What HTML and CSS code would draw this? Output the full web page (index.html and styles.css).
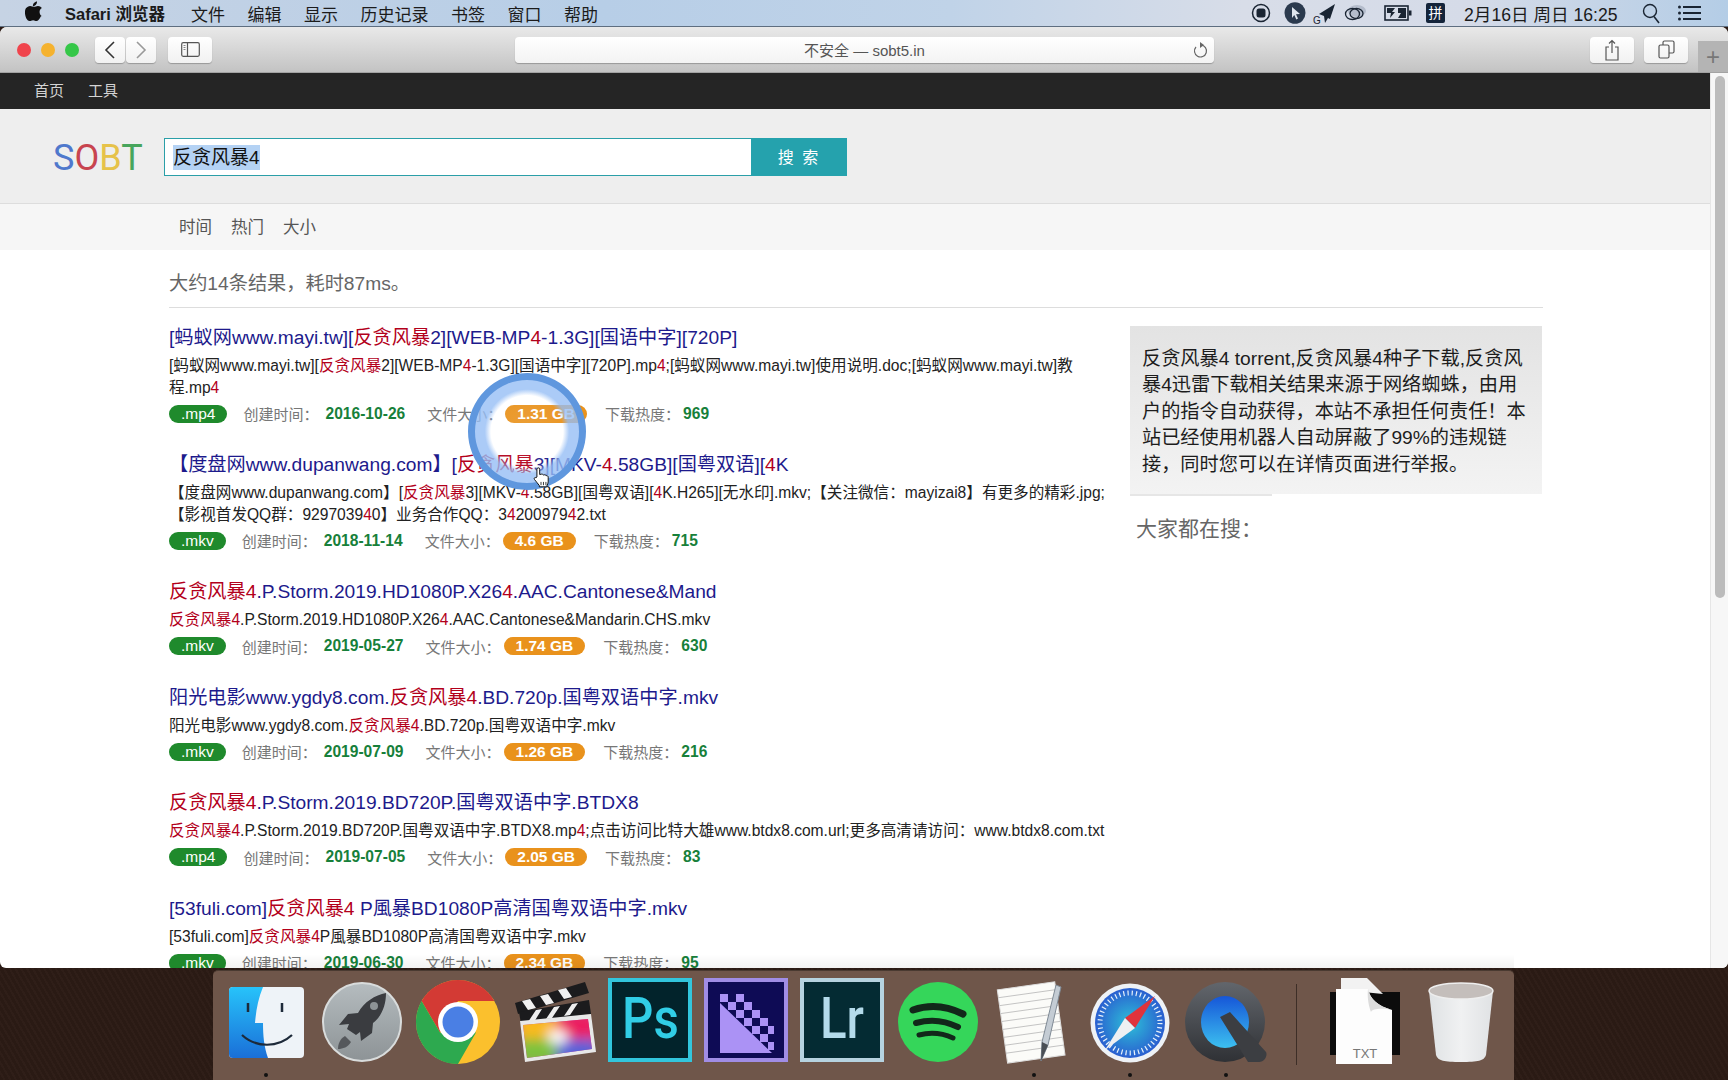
FILE: index.html
```html
<!DOCTYPE html>
<html lang="zh-CN">
<head>
    <meta charset="UTF-8">
    <title>反贪风暴4 - SOBT</title>
    <link rel="stylesheet" href="styles.css">
</head>
<body>

<!-- 系统菜单栏 -->
<div class="menubar">
    <svg class="apple" viewBox="0 0 17 20" width="17" height="20"><path fill="#111" d="M12 .5c.1 1.300-.4 2.500-1.100 3.300-.8.900-1.900 1.500-3 1.400-.1-1.200.4-2.400 1.100-3.200C9.800 1.100 11 .5 12 .5zM16.300 14.600c-.5 1.100-.7 1.500-1.300 2.500-.9 1.300-2 2.900-3.500 2.900-1.300 0-1.600-.8-3.400-.8s-2.200.8-3.500.8c-1.500 0-2.500-1.500-3.400-2.800C-.3 13.700-.6 9.500.9 7.300c1.100-1.500 2.700-2.400 4.300-2.400s2.600.9 3.900.9c1.300 0 2-.9 3.900-.9 1.400 0 2.900.8 3.900 2.100-3.400 1.900-2.900 6.700.4 8.600z"/></svg>
    <span class="menu-app">Safari 浏览器</span>
    <span class="menu-item">文件</span>
    <span class="menu-item">编辑</span>
    <span class="menu-item">显示</span>
    <span class="menu-item">历史记录</span>
    <span class="menu-item">书签</span>
    <span class="menu-item">窗口</span>
    <span class="menu-item">帮助</span>
    <div class="status">
        <svg width="20" height="20" viewBox="0 0 20 20"><circle cx="10" cy="10" r="8.500" fill="none" stroke="#1a2533" stroke-width="1.500"/><rect x="5.500" y="5.500" width="9" height="9" rx="2.500" fill="#1a2533"/></svg>
        <svg width="22" height="22" viewBox="0 0 22 22"><ellipse cx="11" cy="11" rx="10.500" ry="10.800" fill="#2b3a4e"/><path d="M8 5l8 7-4 .3 2 4.300-1.700.8-2-4.300L8 16z" fill="#dfe6ee"/></svg>
        <svg width="22" height="22" viewBox="0 0 22 22"><path d="M22 2L6 12l5 2 1 7 3-5 2 1z" fill="#1a2533"/><text x="0" y="22" class="tiny-g">G</text></svg>
        <svg width="22" height="20" viewBox="0 0 22 20"><ellipse cx="13" cy="8" rx="9" ry="6" fill="#b4bccb"/><ellipse cx="8.500" cy="11" rx="7" ry="5.500" fill="none" stroke="#1a2533" stroke-width="1.300"/><ellipse cx="12.500" cy="10.500" rx="6.500" ry="5" fill="none" stroke="#1a2533" stroke-width="1.300"/></svg>
        <svg width="28" height="18" viewBox="0 0 28 18"><rect x="1" y="2" width="23" height="14" fill="none" stroke="#1a2533" stroke-width="1.600"/><rect x="25" y="6.500" width="2.500" height="5" fill="#1a2533"/><path d="M3 4h8l-3 4h3l-5 6 1-5H3zM14 4h8v10h-8l3-5h-3z" fill="#1a2533"/></svg>
        <span class="ime">拼</span>
        <span class="clock">2月16日 周日 16:25</span>
        <svg width="19" height="21" viewBox="0 0 19 21"><circle cx="8" cy="8" r="6.500" fill="none" stroke="#1a2533" stroke-width="1.400"/><path d="M12 13.500L17 20" stroke="#1a2533" stroke-width="1.600"/></svg>
        <svg width="23" height="16" viewBox="0 0 23 16"><g fill="#1a2533"><circle cx="1.500" cy="2" r="1.500"/><circle cx="1.500" cy="8" r="1.500"/><circle cx="1.500" cy="14" r="1.500"/><rect x="5" y="1" width="18" height="2"/><rect x="5" y="7" width="18" height="2"/><rect x="5" y="13" width="18" height="2"/></g></svg>
    </div>
</div>

<div class="window">
    <!-- Safari 工具栏 -->
    <div class="toolbar">
        <i class="light red"></i><i class="light yellow"></i><i class="light green"></i>
        <div class="tool-btn back"><svg width="12" height="20" viewBox="0 0 12 20"><path d="M10 2L2 10l8 8" fill="none" stroke="#333" stroke-width="1.600"/></svg></div>
        <div class="tool-btn forward"><svg width="12" height="20" viewBox="0 0 12 20"><path d="M2 2l8 8-8 8" fill="none" stroke="#999" stroke-width="1.600"/></svg></div>
        <div class="tool-btn sidebar"><svg width="19" height="15" viewBox="0 0 19 15"><rect x=".7" y=".7" width="17.600" height="13.600" rx="1.500" fill="none" stroke="#555" stroke-width="1.200"/><path d="M6.500 1v13" stroke="#555" stroke-width="1.200"/><path d="M2.500 3.500h2M2.500 5.500h2M2.500 7.500h2" stroke="#888"/></svg></div>
        <div class="url-bar">
            <span class="url-text">不安全 — sobt5.in</span>
            <svg class="reload" width="16" height="18" viewBox="0 0 16 18"><path d="M9 4a6 6 0 1 1-5 2" fill="none" stroke="#666" stroke-width="1.200"/><path d="M8 1l4 3-4 3z" fill="#666"/></svg>
        </div>
        <div class="tool-btn share"><svg width="16" height="22" viewBox="0 0 16 22"><path d="M5 8H2v13h12V8h-3" fill="none" stroke="#555" stroke-width="1.200"/><path d="M8 14V2M5 4.500L8 1.500l3 3" fill="none" stroke="#555" stroke-width="1.200"/></svg></div>
        <div class="tool-btn tabs"><svg width="17" height="19" viewBox="0 0 17 19"><rect x="1" y="5" width="10" height="13" rx="1.500" fill="none" stroke="#555" stroke-width="1.200"/><path d="M5 5V2.500A1.500 1.500 0 0 1 6.500 1h8A1.500 1.500 0 0 1 16 2.500v9a1.500 1.500 0 0 1-1.500 1.500H11" fill="none" stroke="#555" stroke-width="1.200"/></svg></div>
        <div class="new-tab">+</div>
    </div>

    <div class="viewport">
        <div class="page">
            <div class="topnav"><a>首页</a><a>工具</a></div>

            <div class="search-head">
                <div class="logo"><span class="c-s">S</span><span class="c-o">O</span><span class="c-b">B</span><span class="c-t">T</span></div>
                <div class="search-input"><span class="selected">反贪风暴4</span></div>
                <div class="search-btn">搜 索</div>
            </div>

            <div class="sortbar"><a>时间</a><a>热门</a><a>大小</a></div>

            <div class="content">
                <div class="stats">大约14条结果，耗时87ms。</div>
                <div class="columns">
                    <div class="results">

                        <div class="item">
                            <h3><a>[蚂蚁网www.mayi.tw][<em>反贪风暴</em>2][WEB-MP<em>4</em>-1.3G][国语中字][720P]</a></h3>
                            <p>[蚂蚁网www.mayi.tw][<em>反贪风暴</em>2][WEB-MP<em>4</em>-1.3G][国语中字][720P].mp<em>4</em>;[蚂蚁网www.mayi.tw]使用说明.doc;[蚂蚁网www.mayi.tw]教<br>程.mp<em>4</em></p>
                            <div class="meta"><span class="ext">.mp4</span><span class="label">创建时间：</span><b>2016-10-26</b><span class="label">文件大小：</span><span class="size">1.31 GB</span><span class="label">下载热度：</span><b>969</b></div>
                        </div>

                        <div class="item">
                            <h3><a>【度盘网www.dupanwang.com】[<em>反贪风暴</em>3][MKV-<em>4</em>.58GB][国粤双语][<em>4</em>K</a></h3>
                            <p>【度盘网www.dupanwang.com】[<em>反贪风暴</em>3][MKV-<em>4</em>.58GB][国粤双语][<em>4</em>K.H265][无水印].mkv;【关注微信：mayizai8】有更多的精彩.jpg;<br>【影视首发QQ群：9297039<em>4</em>0】业务合作QQ：3<em>4</em>200979<em>4</em>2.txt</p>
                            <div class="meta"><span class="ext">.mkv</span><span class="label">创建时间：</span><b>2018-11-14</b><span class="label">文件大小：</span><span class="size">4.6 GB</span><span class="label">下载热度：</span><b>715</b></div>
                        </div>

                        <div class="item">
                            <h3><a><em>反贪风暴4</em>.P.Storm.2019.HD1080P.X26<em>4</em>.AAC.Cantonese&amp;Mand</a></h3>
                            <p><em>反贪风暴4</em>.P.Storm.2019.HD1080P.X26<em>4</em>.AAC.Cantonese&amp;Mandarin.CHS.mkv</p>
                            <div class="meta"><span class="ext">.mkv</span><span class="label">创建时间：</span><b>2019-05-27</b><span class="label">文件大小：</span><span class="size">1.74 GB</span><span class="label">下载热度：</span><b>630</b></div>
                        </div>

                        <div class="item">
                            <h3><a>阳光电影www.ygdy8.com.<em>反贪风暴4</em>.BD.720p.国粤双语中字.mkv</a></h3>
                            <p>阳光电影www.ygdy8.com.<em>反贪风暴4</em>.BD.720p.国粤双语中字.mkv</p>
                            <div class="meta"><span class="ext">.mkv</span><span class="label">创建时间：</span><b>2019-07-09</b><span class="label">文件大小：</span><span class="size">1.26 GB</span><span class="label">下载热度：</span><b>216</b></div>
                        </div>

                        <div class="item">
                            <h3><a><em>反贪风暴4</em>.P.Storm.2019.BD720P.国粤双语中字.BTDX8</a></h3>
                            <p><em>反贪风暴4</em>.P.Storm.2019.BD720P.国粤双语中字.BTDX8.mp<em>4</em>;点击访问比特大雄www.btdx8.com.url;更多高清请访问：www.btdx8.com.txt</p>
                            <div class="meta"><span class="ext">.mp4</span><span class="label">创建时间：</span><b>2019-07-05</b><span class="label">文件大小：</span><span class="size">2.05 GB</span><span class="label">下载热度：</span><b>83</b></div>
                        </div>

                        <div class="item">
                            <h3><a>[53fuli.com]<em>反贪风暴4</em> P風暴BD1080P高清国粤双语中字.mkv</a></h3>
                            <p>[53fuli.com]<em>反贪风暴4</em>P風暴BD1080P高清国粤双语中字.mkv</p>
                            <div class="meta"><span class="ext">.mkv</span><span class="label">创建时间：</span><b>2019-06-30</b><span class="label">文件大小：</span><span class="size">2.34 GB</span><span class="label">下载热度：</span><b>95</b></div>
                        </div>

                    </div>

                    <div class="side">
                        <div class="notice">反贪风暴4 torrent,反贪风暴4种子下载,反贪风暴4迅雷下载相关结果来源于网络蜘蛛，由用户的指令自动获得，本站不承担任何责任！本站已经使用机器人自动屏蔽了99%的违规链接，同时您可以在详情页面进行举报。</div>
                        <div class="notice-line"></div>
                        <h4>大家都在搜：</h4>
                    </div>
                </div>
            </div>
        </div>
        <div class="scrollbar"><div class="thumb"></div></div>

        <!-- 录屏的鼠标高亮 -->
        <div class="click-ring"></div>
        <svg class="hand" width="18" height="22" viewBox="0 0 22 26"><path d="M6 13V3.500a1.700 1.700 0 0 1 3.400 0V10l2-.5c1-.2 2 .2 2.300 1l1.600-.2c1-.1 1.700.4 2 1.100 1.300-.3 2.500.5 2.500 1.800V19c0 2-1 3-1.500 4.500v1.500H9v-1.500c-1.500-2-4-5-6-7.500-1-1.500.5-3 2-2z" fill="#fff" stroke="#111" stroke-width="1.200"/><path d="M11 19v4M14 19v4M17 19v4" stroke="#111"/></svg>
        <div class="dock-shadow"></div>
    </div>
</div>

<!-- Dock -->
<div class="dock">
    <div class="dock-item">
        <svg viewBox="0 0 84 84"><defs><linearGradient id="fb" x1="0" y1="0" x2="0" y2="1"><stop offset="0" stop-color="#27c3fa"/><stop offset="1" stop-color="#1a6fd8"/></linearGradient></defs><rect x="5" y="8" width="75" height="71" rx="4" fill="#eef3f8"/><path d="M9 8h30c-5 12-7 24-8 36h8c0 12 1 24 5 35H9a4 4 0 0 1-4-4V12a4 4 0 0 1 4-4z" fill="url(#fb)"/><path d="M24 24v9M58 24v9" stroke="#1d2a3a" stroke-width="2.500"/><path d="M18 56c14 13 36 13 50 0" fill="none" stroke="#1d2a3a" stroke-width="2.200"/></svg>
        <i class="dot"></i>
    </div>
    <div class="dock-item">
        <svg viewBox="0 0 84 84"><defs><linearGradient id="rk" x1="0" y1="0" x2="0" y2="1"><stop offset="0" stop-color="#b5bcbf"/><stop offset="1" stop-color="#8d9396"/></linearGradient></defs><circle cx="42" cy="43" r="39" fill="url(#rk)" stroke="#d9dcdc" stroke-width="2"/><path d="M66 14c-11 2-22 9-28 20l-10 1-9 11 10-1-2 5 9 6 4-3 1 9 11-8 1-10c9-7 13-18 13-30z" fill="#3a3c40"/><circle cx="54" cy="27" r="4" fill="#8d9396"/><path d="M25 57c-5 3-7 8-7 13 5 0 10-2 13-7z" fill="#55585c"/></svg>
    </div>
    <div class="dock-item">
        <svg viewBox="0 0 84 84"><circle cx="42" cy="43" r="42" fill="#fbc02d"/><path d="M5.600 22A42 42 0 0 1 78.400 22H42L24 53.500z" fill="#d33a34"/><path d="M5.600 22A42 42 0 0 0 42 85L60 53.500H24z" fill="#2da94f"/><circle cx="42" cy="43" r="20" fill="#fff"/><circle cx="42" cy="43" r="15.500" fill="#4a7fe4"/></svg>
    </div>
    <div class="dock-item">
        <svg viewBox="0 0 84 84"><defs><filter id="fbl"><feGaussianBlur stdDeviation="6"/></filter><clipPath id="fcc"><path d="M11 46l65-6 4 30-65 9z"/></clipPath></defs><path d="M3 24l70-21 4 11L6 35z" fill="#1b1b1d"/><path d="M10 22l8-2 6 9-8 2zM28 17l8-2 6 9-8 2zM46 11l8-2 6 9-8 2z" fill="#f1f1f1"/><path d="M7 33l70-12 2 14L9 45z" fill="#1b1b1d"/><path d="M16 43l8-12 6-1-8 13zM34 40l8-12 6-1-8 12zM52 37l8-12 6-1-8 12z" fill="#eee"/><path d="M8 42l71-7 5 38-71 10z" fill="#e8e8e8"/><g clip-path="url(#fcc)"><rect x="5" y="35" width="80" height="50" fill="#c84a9a"/><g filter="url(#fbl)"><path d="M5 35h40v25H5z" fill="#f9b91e"/><path d="M45 35h40v25H45z" fill="#ec1f5e"/><path d="M5 60h40v25H5z" fill="#7dc23c"/><path d="M45 60h40v25H45z" fill="#5862d8"/><ellipse cx="46" cy="58" rx="10" ry="7" fill="#fff"/></g></g></svg>
    </div>
    <div class="dock-item">
        <div class="adobe ps"><span>Ps</span></div>
    </div>
    <div class="dock-item">
        <svg class="me" viewBox="0 0 84 84"><rect x="2" y="1" width="80" height="80" fill="#0e0b55" stroke="#a08de6" stroke-width="4"/><path d="M16 24l52 50H16z" fill="#ab92f5"/><g fill="#ab92f5"><rect x="16" y="15" width="8" height="8"/><rect x="24" y="23" width="8" height="8"/><rect x="32" y="31" width="8" height="8"/><rect x="40" y="39" width="8" height="8"/><rect x="48" y="47" width="8" height="8"/><rect x="56" y="55" width="8" height="8"/><rect x="32" y="15" width="8" height="8"/><rect x="40" y="23" width="8" height="8"/><rect x="48" y="31" width="8" height="8"/><rect x="56" y="39" width="8" height="8"/><rect x="64" y="47" width="6" height="8"/><rect x="64" y="63" width="6" height="8"/></g></svg>
    </div>
    <div class="dock-item">
        <div class="adobe lr"><span>Lr</span></div>
    </div>
    <div class="dock-item">
        <svg viewBox="0 0 84 84"><circle cx="42" cy="43" r="40" fill="#35d65a"/><g fill="none" stroke="#12281a" stroke-linecap="round"><path d="M17 31c17-6 34-4 50 4" stroke-width="7"/><path d="M20 44c14-4 28-3 42 4" stroke-width="6"/><path d="M23 56c12-3 23-2 34 3" stroke-width="5"/></g></svg>
    </div>
    <div class="dock-item">
        <svg viewBox="0 0 84 84"><g transform="rotate(-8 42 42)"><rect x="10" y="6" width="58" height="74" fill="#fbfbf8" stroke="#ddd"/><g stroke="#b9b9b9" stroke-width=".8"><path d="M10 14h58M10 22h58M10 30h58M10 38h58M10 46h58M10 54h58M10 62h58M10 70h58"/></g></g><path d="M64 6l5 2-13 58-7 16 1-19z" fill="#c4ccd4" stroke="#7f8a95"/><path d="M49 82l1-19 6 3z" fill="#4a4f55"/></svg>
        <i class="dot"></i>
    </div>
    <div class="dock-item">
        <svg viewBox="0 0 84 84"><defs><radialGradient id="sf"><stop offset="0" stop-color="#2dc0d8"/><stop offset="1" stop-color="#2a5fd0"/></radialGradient></defs><circle cx="42" cy="44" r="39.500" fill="#eef2f6"/><circle cx="42" cy="44" r="35" fill="url(#sf)"/><circle cx="42" cy="44" r="30" fill="none" stroke="#e8f2fb" stroke-width="5" stroke-dasharray="1.200 3"/><path d="M67 17L37 39l10 10z" fill="#e0333c"/><path d="M17 71l30-22-10-10z" fill="#eef0f2"/></svg>
        <i class="dot"></i>
    </div>
    <div class="dock-item">
        <svg viewBox="0 0 84 84"><defs><linearGradient id="qt" x1="0" y1="0" x2="0" y2="1"><stop offset="0" stop-color="#1656d8"/><stop offset="1" stop-color="#3cc0f0"/></linearGradient><linearGradient id="qr" x1="0" y1="0" x2="0" y2="1"><stop offset="0" stop-color="#62666c"/><stop offset="1" stop-color="#2f3135"/></linearGradient></defs><circle cx="41" cy="43" r="40" fill="url(#qr)"/><ellipse cx="41" cy="43" rx="24" ry="26" fill="url(#qt)"/><path d="M36 38l10-5 36 40c2 4-2 11-8 10H64z" fill="#3c3e42"/></svg>
        <i class="dot"></i>
    </div>
    <div class="dock-sep"></div>
    <div class="dock-item">
        <svg viewBox="0 0 84 84"><rect x="7" y="13" width="70" height="63" fill="#0c0c0c"/><path d="M18 -1h26l16 16L40 13H18z" fill="#f2f2f2"/><path d="M13 10h32c2 10 10 17 24 21v54H13z" fill="#fdfdfd"/><path d="M45 10c2 10 10 17 24 21-8-2-20-2-21 2-2-5-4-14-3-23z" fill="#dcdcdc"/><text x="42" y="79" class="txt-label">TXT</text></svg>
    </div>
    <div class="dock-item">
        <svg viewBox="0 0 84 84"><defs><linearGradient id="tr" x1="0" y1="0" x2="1" y2="0"><stop offset="0" stop-color="#dfe2e4"/><stop offset=".5" stop-color="#f0f1f2"/><stop offset="1" stop-color="#e0e2e4"/></linearGradient></defs><path d="M10 12l7 64c2 6 8 7 25 7s23-1 25-7l7-64z" fill="url(#tr)"/><ellipse cx="42" cy="12" rx="32" ry="8" fill="#c4bebb" stroke="#eee" stroke-width="1.500"/></svg>
    </div>
</div>

</body>
</html>
```

FILE: styles.css
```css
* {
    box-sizing: border-box;
}
html, body {
    margin: 0;
    padding: 0;
    height: 1080px;
    overflow: hidden;
}
body {
    position: relative;
    font-family: "Liberation Sans", "Noto Sans CJK SC", sans-serif;
    background: repeating-linear-gradient(60deg, #2a1a14 0, #2a1a14 3px, #2f1e18 3px, #2f1e18 5px);
}

/* 菜单栏 */
.menubar {
    height: 27px;
    display: flex;
    align-items: center;
    padding-left: 25px;
    font-size: 17px;
    color: #1b1b1b;
    background: linear-gradient(90deg, #c6d3e4 0, #b7cee7 35%, #c0d3e8 55%, #d8dde8 72%, #d5dbe8 85%, #b4cde6 100%);
    border-bottom: 1px solid #5e6e80;
}
.apple {
    margin: -4px 23px 0 0;
}
.menu-app {
    font-weight: 700;
    font-size: 16.500px;
    width: 103px;
    white-space: nowrap;
    margin-right: 23px;
}
.menu-item {
    margin-right: 22.500px;
}
.status {
    margin-left: auto;
    display: flex;
    align-items: center;
    padding-right: 27px;
}
.status > :nth-child(1) { margin-right: 13px; }
.status > :nth-child(2) { margin-right: 7px; }
.status > :nth-child(3) { margin-right: 9px; }
.status > :nth-child(4) { margin-right: 18px; }
.status > :nth-child(5) { margin-right: 14px; }
.status > :nth-child(6) { margin-right: 19px; }
.status > :nth-child(7) { margin-right: 24px; }
.status > :nth-child(8) { margin-right: 17px; }
.tiny-g {
    font-size: 10px;
    fill: #1a2533;
}
.ime {
    width: 19px;
    height: 20px;
    background: #14243a;
    color: #fff;
    font-size: 14px;
    line-height: 20px;
    text-align: center;
    border-radius: 2px;
}
.clock {
    font-size: 17.600px;
    white-space: nowrap;
    width: 154px;
}

/* 浏览器窗口 */
.window {
    position: absolute;
    left: 0;
    top: 27px;
    width: 1728px;
    height: 941px;
    display: flex;
    flex-direction: column;
    border-radius: 7px 7px 6px 6px;
    overflow: hidden;
    background: #fff;
}
.toolbar {
    height: 46px;
    flex: none;
    display: flex;
    align-items: center;
    padding-left: 17px;
    position: relative;
    background: linear-gradient(#e9e9e9, #c3c3c3);
    border-bottom: 1px solid #a3a3a3;
}
.light {
    width: 14px;
    height: 14px;
    border-radius: 50%;
    margin-right: 10px;
    flex: none;
}
.red { background: #f0444c; }
.yellow { background: #f5b22e; }
.green { background: #35c748; }
.tool-btn {
    height: 26px;
    background: linear-gradient(#fff, #f1f1f1);
    border-radius: 4px;
    box-shadow: 0 1px 1px rgba(0, 0, 0, 0.25);
    display: flex;
    align-items: center;
    justify-content: center;
    flex: none;
}
.back { width: 30px; margin-left: 6px; }
.forward { width: 30px; margin-left: 1px; }
.sidebar { width: 44px; margin-left: 12px; }
.url-bar {
    width: 699px;
    height: 26px;
    margin-left: 303px;
    background: linear-gradient(#fff, #f3f3f3);
    border-radius: 4px;
    box-shadow: 0 1px 1px rgba(0, 0, 0, 0.25);
    display: flex;
    align-items: center;
    justify-content: center;
    position: relative;
    flex: none;
}
.url-text {
    font-size: 15px;
    color: #555;
}
.reload {
    position: absolute;
    right: 6px;
    top: 4px;
}
.share { width: 44px; margin-left: 376px; }
.tabs { width: 44px; margin-left: 10px; }
.new-tab {
    position: absolute;
    right: 0;
    bottom: 0;
    width: 30px;
    height: 31px;
    background: #b4b4b4;
    color: #777;
    font-size: 24px;
    font-weight: 300;
    line-height: 31px;
    text-align: center;
}

.viewport {
    flex: 1;
    display: flex;
    position: relative;
    overflow: hidden;
}
.page {
    width: 1710px;
    flex: none;
}
.scrollbar {
    flex: 1;
    background: #f7f7f7;
    border-left: 1px solid #e6e6e6;
    padding: 3px 3px 0 4px;
}
.thumb {
    height: 522px;
    background: #bcbcbc;
    border-radius: 5px;
}

/* 网站头部 */
.topnav {
    height: 36px;
    background: #252525;
    display: flex;
    align-items: center;
    gap: 24px;
    padding: 0 0 4px 34px;
    font-size: 15px;
    color: #d4d4d4;
}
.search-head {
    height: 95px;
    background: #eee;
    border-bottom: 1px solid #ddd;
    display: flex;
    align-items: center;
    padding: 2px 0 0 53px;
}
.logo {
    width: 111px;
    font-family: Roboto, "Liberation Sans", sans-serif;
    font-size: 36px;
    font-weight: 400;
    margin-top: 2px;
}
.c-s { color: #4f78cc; }
.c-o { color: #c8444f; }
.c-b { color: #e6c24a; }
.c-t { color: #47a55c; }
.search-input {
    width: 593px;
    height: 38px;
    background: #fff;
    border: 1px solid #2a9fa8;
    padding: 6px 0 0 8px;
    font-size: 19px;
    line-height: 25px;
    margin-top: -1px;
    color: #111;
}
.selected {
    background: #b4d2f4;
    display: inline-block;
}
.search-btn {
    width: 96px;
    height: 38px;
    margin-left: -6px;
    background: #25a2ad;
    color: #fff;
    font-size: 16px;
    line-height: 40px;
    text-align: center;
    letter-spacing: 2px;
    position: relative;
}
.sortbar {
    height: 46px;
    background: #f6f6f6;
    display: flex;
    align-items: center;
    gap: 19px;
    padding: 0 0 2px 179px;
    font-size: 16.500px;
    color: #555;
}

/* 结果 */
.content {
    padding: 0 167px 0 169px;
}
.stats {
    height: 58px;
    border-bottom: 1px solid #ddd;
    padding-top: 20px;
    font-size: 19.200px;
    line-height: 27px;
    color: #666;
}
.columns {
    display: flex;
}
.results {
    width: 961px;
    flex: none;
    padding-top: 19px;
}
.item {
    padding-bottom: 30px;
}
.item h3 {
    margin: 0 0 6px;
    font-size: 19.200px;
    font-weight: 400;
    line-height: 22px;
}
.item h3 a {
    color: #1d1a8c;
}
.item em {
    font-style: normal;
    color: #b3001b;
}
.item p {
    margin: 0 0 5px;
    font-size: 15.600px;
    line-height: 21.500px;
    color: #222;
    white-space: nowrap;
}
.meta {
    display: flex;
    align-items: center;
    height: 21px;
    font-size: 15px;
    color: #777;
    white-space: nowrap;
}
.meta b {
    color: #17803a;
    font-size: 15.600px;
    margin-right: 22px;
}
.meta b:last-child {
    margin: 0 0 0 -4px;
}
.label {
    margin-right: 7px;
}
.ext {
    background: #1f8a2c;
    color: #fff;
    height: 18px;
    line-height: 18px;
    padding: 0 12px;
    border-radius: 9px;
    font-size: 15.500px;
    margin-right: 16px;
}
.size {
    background: #e9921c;
    color: #fff;
    font-weight: 700;
    font-size: 15.500px;
    height: 18px;
    line-height: 18px;
    padding: 0 12px;
    border-radius: 9px;
    margin: 0 18px 0 -4px;
}

/* 右侧 */
.side {
    width: 412px;
    flex: none;
    padding-top: 18px;
}
.notice {
    height: 168px;
    padding: 20px 12px 0;
    background: linear-gradient(#e3e3e3, #f3f3f3);
    font-size: 19.200px;
    line-height: 26.400px;
    color: #1c1c1c;
}
.notice-line {
    width: 142px;
    height: 2px;
    background: #e6e6e6;
}
.side h4 {
    margin: 20px 0 0 6px;
    font-size: 21px;
    line-height: 26px;
    font-weight: 400;
    color: #666;
}

/* 录屏高亮 */
.click-ring {
    position: absolute;
    left: 468px;
    top: 300px;
    width: 118px;
    height: 117px;
    border-radius: 50%;
    border: 7px solid #5f97de;
    background: radial-gradient(circle closest-side at 50% 50%, rgba(255, 255, 255, 0.12) 0, rgba(255, 255, 255, 0.05) 70%, rgba(150, 190, 245, 0.8) 82%);
}
.hand {
    position: absolute;
    left: 532px;
    top: 393px;
}
.dock-shadow {
    position: absolute;
    left: 213px;
    bottom: 0;
    width: 1301px;
    height: 14px;
    background: linear-gradient(rgba(0, 0, 0, 0), rgba(0, 0, 0, 0.05));
}

/* Dock */
.dock {
    position: absolute;
    left: 213px;
    top: 970px;
    width: 1301px;
    height: 110px;
    padding: 8px 5px 0;
    display: flex;
    background: #6f564a;
    border-top: 1px solid #4a3a31;
    border-radius: 5px 5px 0 0;
}
.dock-item {
    width: 96px;
    flex: none;
    display: flex;
    flex-direction: column;
    align-items: center;
}
.dock-item svg {
    width: 84px;
    height: 84px;
    flex: none;
    overflow: visible;
}
.dot {
    width: 4px;
    height: 4px;
    margin-top: 10px;
    border-radius: 50%;
    background: #111;
}
.dock-sep {
    width: 43px;
    flex: none;
    position: relative;
}
.dock-sep::before {
    content: "";
    position: absolute;
    left: 22px;
    top: 5px;
    width: 1px;
    height: 81px;
    background: #3d2e27;
}
.adobe {
    width: 84px;
    height: 84px;
    margin-top: -1px;
    border: 4px solid;
    font-family: Roboto, "Liberation Sans", sans-serif;
    font-size: 58px;
    font-weight: 500;
    line-height: 72px;
    text-align: center;
}
.adobe span {
    display: inline-block;
    transform: scaleX(0.85);
}
.ps {
    background: #02232b;
    border-color: #32c5dc;
    color: #31cde6;
}
.lr {
    background: #042b33;
    border-color: #b6d3e0;
    color: #b4dbeb;
}
.txt-label {
    font-size: 13px;
    fill: #777;
    text-anchor: middle;
}
```
